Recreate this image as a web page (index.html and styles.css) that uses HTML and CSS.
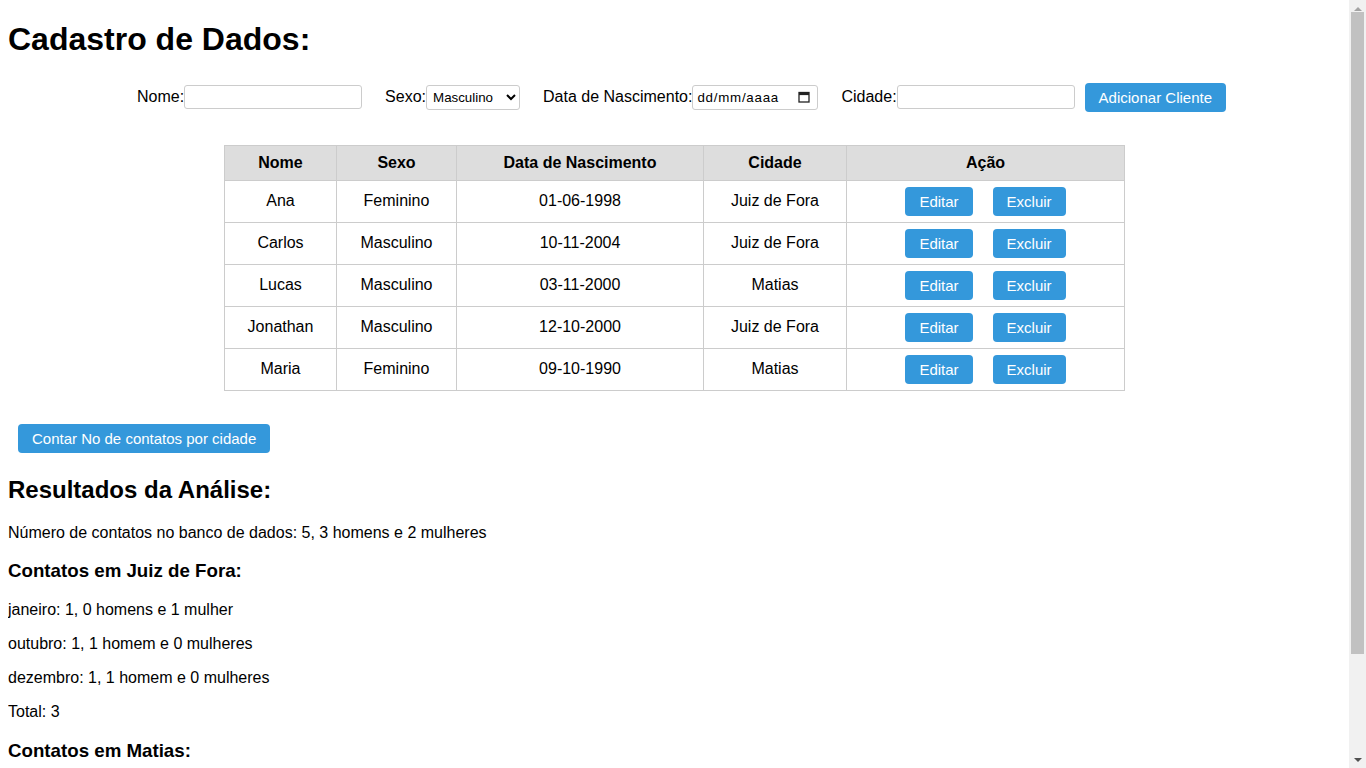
FILE: index.html
```html
<!DOCTYPE html>
<html lang="pt-BR">
<head>
<meta charset="utf-8">
<title>Cadastro de Dados</title>
<link rel="stylesheet" href="styles.css">
</head>
<body>
<h1>Cadastro de Dados:</h1>

<form class="form-row">
  <div class="field">
    <label for="nome">Nome:</label><input id="nome" class="text-input" type="text">
  </div>
  <div class="field">
    <label for="sexo">Sexo:</label><select id="sexo" class="select-input"><option>Masculino</option><option>Feminino</option></select>
  </div>
  <div class="field">
    <label for="nasc">Data de Nascimento:</label><span class="date-field"><input id="nasc" class="date-text" type="text" placeholder="dd/mm/aaaa"><svg class="cal-icon" width="12" height="12" viewBox="0 0 12 12"><rect x="1" y="1.5" width="10" height="9.5" fill="none" stroke="#222" stroke-width="1.3"/><rect x="1" y="1.5" width="10" height="2.6" fill="#222"/></svg></span>
  </div>
  <div class="field field-last">
    <label for="cidade">Cidade:</label><input id="cidade" class="text-input" type="text">
  </div>
  <button type="button" class="btn btn-add">Adicionar Cliente</button>
</form>

<table class="clients">
  <thead>
    <tr>
      <th class="c-nome">Nome</th>
      <th class="c-sexo">Sexo</th>
      <th class="c-data">Data de Nascimento</th>
      <th class="c-cidade">Cidade</th>
      <th class="c-acao">Ação</th>
    </tr>
  </thead>
  <tbody>
    <tr><td>Ana</td><td>Feminino</td><td>01-06-1998</td><td>Juiz de Fora</td><td><button class="btn btn-row">Editar</button><button class="btn btn-row">Excluir</button></td></tr>
    <tr><td>Carlos</td><td>Masculino</td><td>10-11-2004</td><td>Juiz de Fora</td><td><button class="btn btn-row">Editar</button><button class="btn btn-row">Excluir</button></td></tr>
    <tr><td>Lucas</td><td>Masculino</td><td>03-11-2000</td><td>Matias</td><td><button class="btn btn-row">Editar</button><button class="btn btn-row">Excluir</button></td></tr>
    <tr><td>Jonathan</td><td>Masculino</td><td>12-10-2000</td><td>Juiz de Fora</td><td><button class="btn btn-row">Editar</button><button class="btn btn-row">Excluir</button></td></tr>
    <tr><td>Maria</td><td>Feminino</td><td>09-10-1990</td><td>Matias</td><td><button class="btn btn-row">Editar</button><button class="btn btn-row">Excluir</button></td></tr>
  </tbody>
</table>

<div class="count-wrap">
  <button type="button" class="btn btn-count">Contar No de contatos por cidade</button>
</div>

<h2>Resultados da Análise:</h2>
<p>Número de contatos no banco de dados: 5, 3 homens e 2 mulheres</p>

<h3>Contatos em Juiz de Fora:</h3>
<p>janeiro: 1, 0 homens e 1 mulher</p>
<p>outubro: 1, 1 homem e 0 mulheres</p>
<p>dezembro: 1, 1 homem e 0 mulheres</p>
<p>Total: 3</p>

<h3>Contatos em Matias:</h3>
<p>março: 1, 1 homem e 0 mulheres</p>
<p>setembro: 1, 0 homens e 1 mulher</p>
<p>Total: 2</p>

<div class="scrollbar" aria-hidden="true">
  <div class="sb-arrow sb-up"></div>
  <div class="sb-track"><div class="sb-thumb"></div></div>
  <div class="sb-arrow sb-down"></div>
</div>
</body>
</html>
```

FILE: styles.css
```css
html, body {
  font-family: "Liberation Sans", Arial, sans-serif;
  color: #000;
  background: #fff;
}

body {
  margin: 8px 25px 8px 8px;
}

h1 {
  font-size: 32px;
  margin: 13.44px 0 21.44px;
}

.form-row {
  display: flex;
  justify-content: center;
  align-items: center;
  height: 35px;
  margin: 0 0 30px;
  padding-left: 14px;
  padding-right: 0;
  font-size: 16px;
}

.field {
  display: flex;
  align-items: center;
  margin-right: 23px;
}

.field-last {
  margin-right: 10px;
}

.text-input {
  box-sizing: border-box;
  width: 178px;
  height: 24px;
  border: 1px solid #ccc;
  border-radius: 3px;
  padding: 2px 5px;
  font-family: "Liberation Sans", Arial, sans-serif;
  font-size: 13.33px;
  margin: 0;
}

.select-input {
  box-sizing: border-box;
  width: 94px;
  height: 25px;
  border: 1px solid #ccc;
  border-radius: 3px;
  padding: 0 2px;
  font-family: "Liberation Sans", Arial, sans-serif;
  font-size: 13.33px;
  color: #000;
  background: #fff;
  margin: 0;
}

.date-field {
  box-sizing: border-box;
  display: inline-flex;
  align-items: center;
  width: 126px;
  height: 25px;
  border: 1px solid #ccc;
  border-radius: 3px;
  padding: 0 7px 0 4px;
  background: #fff;
}

.date-text {
  flex: 1;
  min-width: 0;
  border: none;
  outline: none;
  padding: 0;
  margin: 0;
  font-family: "Liberation Sans", Arial, sans-serif;
  font-size: 13.33px;
  letter-spacing: 0.75px;
  color: #000;
  background: transparent;
}

.date-text::placeholder {
  color: #000;
  opacity: 1;
}

.cal-icon {
  display: block;
  flex: none;
}

.btn {
  background: #3498db;
  color: #fff;
  border: none;
  border-radius: 4px;
  font-family: "Liberation Sans", Arial, sans-serif;
  font-size: 15px;
  line-height: 17px;
  padding: 6px 14px;
  cursor: pointer;
}

.btn-add {
  height: 29px;
}

.clients {
  width: 900px;
  margin: 0 auto;
  border-collapse: collapse;
  table-layout: fixed;
  font-size: 16px;
}

.clients th,
.clients td {
  box-sizing: border-box;
  border: 1px solid #ccc;
  text-align: center;
}

.clients th {
  background: #ddd;
  font-weight: bold;
  padding: 8px;
}

.clients td {
  padding: 6px 8px;
}

.c-nome { width: 112px; }
.c-sexo { width: 120px; }
.c-data { width: 247px; }
.c-cidade { width: 143px; }
.c-acao { width: 278px; }

.btn-row {
  vertical-align: middle;
  margin: 0 10px;
  height: 29px;
}

.count-wrap {
  margin: 33px 10px 0;
  padding-bottom: 3px;
}

.btn-count {
  display: block;
  height: 29px;
}

h2 {
  font-size: 24px;
}

h3 {
  font-size: 18.72px;
}

p {
  font-size: 16px;
}

/* decorative page scrollbar, drawn over the right edge */
.scrollbar {
  position: fixed;
  top: 0;
  right: 0;
  bottom: 0;
  width: 17px;
  background: #f1f1f1;
  display: flex;
  flex-direction: column;
}

.sb-arrow {
  height: 17px;
  flex: none;
  display: flex;
  align-items: center;
  justify-content: center;
}

.sb-arrow::before {
  content: "";
  width: 0;
  height: 0;
  border-left: 4px solid transparent;
  border-right: 4px solid transparent;
}

.sb-up::before {
  border-bottom: 4px solid #a3a3a3;
}

.sb-down::before {
  border-top: 4px solid #505050;
}

.sb-track {
  flex: 1;
  padding: 0 2px;
}

.sb-thumb {
  height: 642px;
  margin-top: -5px;
  background: #c1c1c1;
}
```
